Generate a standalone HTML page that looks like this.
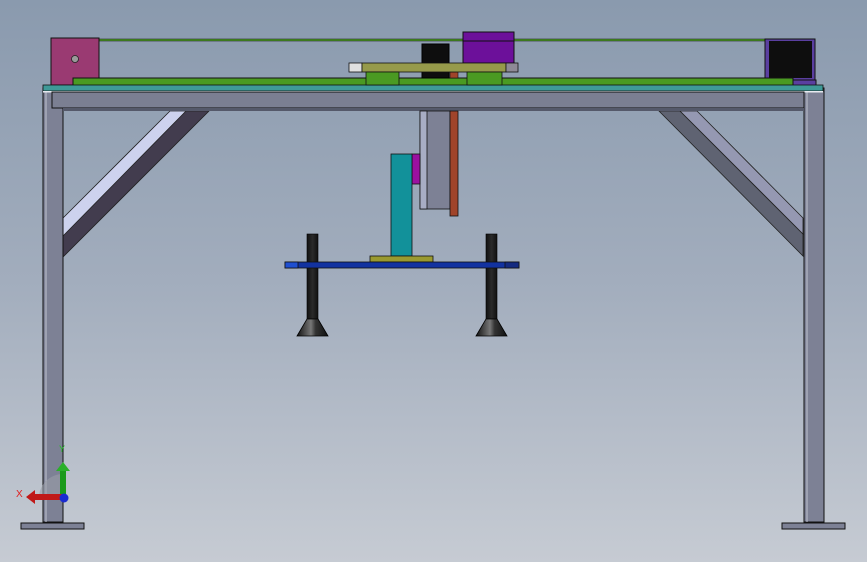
<!DOCTYPE html>
<html><head><meta charset="utf-8"><style>
html,body{margin:0;padding:0;width:867px;height:562px;overflow:hidden}
svg{display:block}
</style></head><body>
<svg width="867" height="562" viewBox="0 0 867 562" xmlns="http://www.w3.org/2000/svg" stroke-linejoin="miter">
<defs>
<linearGradient id="bg" x1="0" y1="0" x2="0" y2="1">
<stop offset="0" stop-color="#8a9aae"/><stop offset="0.5" stop-color="#a2adbd"/><stop offset="1" stop-color="#c6cbd3"/>
</linearGradient>
<linearGradient id="col" x1="0" y1="0" x2="1" y2="0">
<stop offset="0" stop-color="#111"/><stop offset="0.5" stop-color="#2a2a2a"/><stop offset="1" stop-color="#111"/>
</linearGradient>
<linearGradient id="cone" x1="0" y1="0" x2="1" y2="0">
<stop offset="0" stop-color="#111"/><stop offset="0.45" stop-color="#777"/><stop offset="0.6" stop-color="#333"/><stop offset="1" stop-color="#111"/>
</linearGradient>
</defs>
<rect width="867" height="562" fill="url(#bg)"/>

<!-- braces -->
<polygon points="170,111 190,111 63,238 63,218" fill="#cdd2ee" stroke="#222" stroke-width="0.8"/>
<polygon points="186,111 209,111 63,257 63,236" fill="#423c4e" stroke="#222" stroke-width="0.8"/>
<polygon points="659,111 680,111 803,234 803,256" fill="#5f6372" stroke="#222" stroke-width="0.8"/>
<polygon points="680,111 697,111 803,218 803,234" fill="#9598b2" stroke="#222" stroke-width="0.8"/>

<!-- legs -->
<rect x="43" y="88" width="20" height="434" fill="#7d8195" stroke="#111" stroke-width="1"/>
<line x1="46" y1="92" x2="46" y2="522" stroke="#c0c4d0" stroke-width="1"/>
<rect x="804" y="88" width="20" height="434" fill="#7d8195" stroke="#111" stroke-width="1"/>
<line x1="807" y1="92" x2="807" y2="522" stroke="#c0c4d0" stroke-width="1"/>
<rect x="21" y="523" width="63" height="6" fill="#7d8195" stroke="#111" stroke-width="1"/>
<rect x="782" y="523" width="63" height="6" fill="#7d8195" stroke="#111" stroke-width="1"/>

<!-- top rail line -->
<rect x="99" y="39" width="666" height="2" fill="#4a9a22" stroke="#111" stroke-width="0.5"/>

<!-- magenta box -->
<rect x="51" y="38" width="48" height="47" fill="#9a3a72" stroke="#111" stroke-width="1"/>
<circle cx="75" cy="59" r="3.5" fill="#9a9a9a" stroke="#222" stroke-width="0.8"/>

<!-- right motor -->
<rect x="765" y="39" width="50" height="41" fill="#5a3fa0" stroke="#111" stroke-width="1"/>
<rect x="769" y="41" width="43" height="37" fill="#0e0e0e"/>
<rect x="793" y="80" width="23" height="6" fill="#5a3fa0" stroke="#111" stroke-width="1"/>

<!-- green bar -->
<rect x="73" y="78" width="720" height="8" fill="#4a9a22" stroke="#111" stroke-width="1"/>
<!-- teal strip -->
<rect x="43" y="85" width="780" height="6" fill="#3f9a98" stroke="#111" stroke-width="0.8"/>
<rect x="43" y="91" width="780" height="1.5" fill="#e8eaf0"/>
<!-- beam -->
<rect x="52" y="92" width="752" height="16" fill="#7b7f92" stroke="#111" stroke-width="1"/>
<rect x="63" y="108" width="741" height="3" fill="#55596a"/>

<!-- carriage -->
<rect x="422" y="44" width="27" height="34" fill="#0e0e0e" stroke="#000" stroke-width="1"/>
<rect x="463" y="32" width="51" height="31" fill="#6c109a" stroke="#111" stroke-width="1"/>
<line x1="463" y1="41" x2="514" y2="41" stroke="#111" stroke-width="1"/>
<rect x="450" y="72" width="8" height="6" fill="#a0442a" stroke="#111" stroke-width="0.6"/>
<rect x="349" y="63" width="13" height="9" fill="#e0e0e0" stroke="#111" stroke-width="0.8"/>
<rect x="362" y="63" width="144" height="9" fill="#969a4a" stroke="#111" stroke-width="0.8"/>
<rect x="506" y="63" width="12" height="9" fill="#8e8a96" stroke="#111" stroke-width="0.8"/>
<rect x="366" y="72" width="33" height="13" fill="#4a9a22" stroke="#111" stroke-width="0.8"/>
<rect x="467" y="72" width="35" height="13" fill="#4a9a22" stroke="#111" stroke-width="0.8"/>

<!-- hanging parts -->
<rect x="420" y="111" width="30" height="98" fill="#7d8195" stroke="#111" stroke-width="0.8"/>
<rect x="420" y="111" width="7" height="98" fill="#a8adc4" stroke="#111" stroke-width="0.8"/>
<rect x="450" y="111" width="8" height="105" fill="#a0442a" stroke="#111" stroke-width="0.8"/>
<rect x="412" y="154" width="8" height="30" fill="#9a10a0" stroke="#111" stroke-width="0.8"/>
<rect x="391" y="154" width="21" height="102" fill="#12919a" stroke="#111" stroke-width="0.8"/>

<!-- columns -->
<rect x="307" y="234" width="11" height="85" fill="url(#col)" stroke="#000" stroke-width="0.6"/>
<rect x="486" y="234" width="11" height="85" fill="url(#col)" stroke="#000" stroke-width="0.6"/>
<polygon points="307,319 318,319 328,336 297,336" fill="url(#cone)" stroke="#000" stroke-width="0.8"/>
<polygon points="486,319 497,319 507,336 476,336" fill="url(#cone)" stroke="#000" stroke-width="0.8"/>

<rect x="370" y="256" width="63" height="6" fill="#9a9a30" stroke="#111" stroke-width="0.8"/>
<rect x="285" y="262" width="234" height="6" fill="#1232a0" stroke="#111" stroke-width="0.8"/>
<rect x="285" y="262" width="13" height="6" fill="#1f4fd0" stroke="#111" stroke-width="0.8"/>
<rect x="505" y="262" width="14" height="6" fill="#142a80" stroke="#111" stroke-width="0.8"/>

<!-- triad -->
<path d="M63,497 L63,474 A24,24 0 0 0 39,497 Z" fill="#9a9ea8" opacity="0.6"/>
<rect x="60" y="470" width="6" height="28" fill="#1a9a1a"/>
<polygon points="56,471 63,462 70,471" fill="#2ab02a"/>
<rect x="34" y="494" width="30" height="6" fill="#c01818"/>
<polygon points="35,490 26,497 35,504" fill="#c01818"/>
<circle cx="64" cy="498" r="4.5" fill="#1a2ad0"/>
<text x="59" y="452" font-family="Liberation Sans, sans-serif" font-size="9" fill="#20c020">Y</text>
<text x="16" y="497" font-family="Liberation Sans, sans-serif" font-size="10" fill="#e02020">X</text>
</svg>
</body></html>
